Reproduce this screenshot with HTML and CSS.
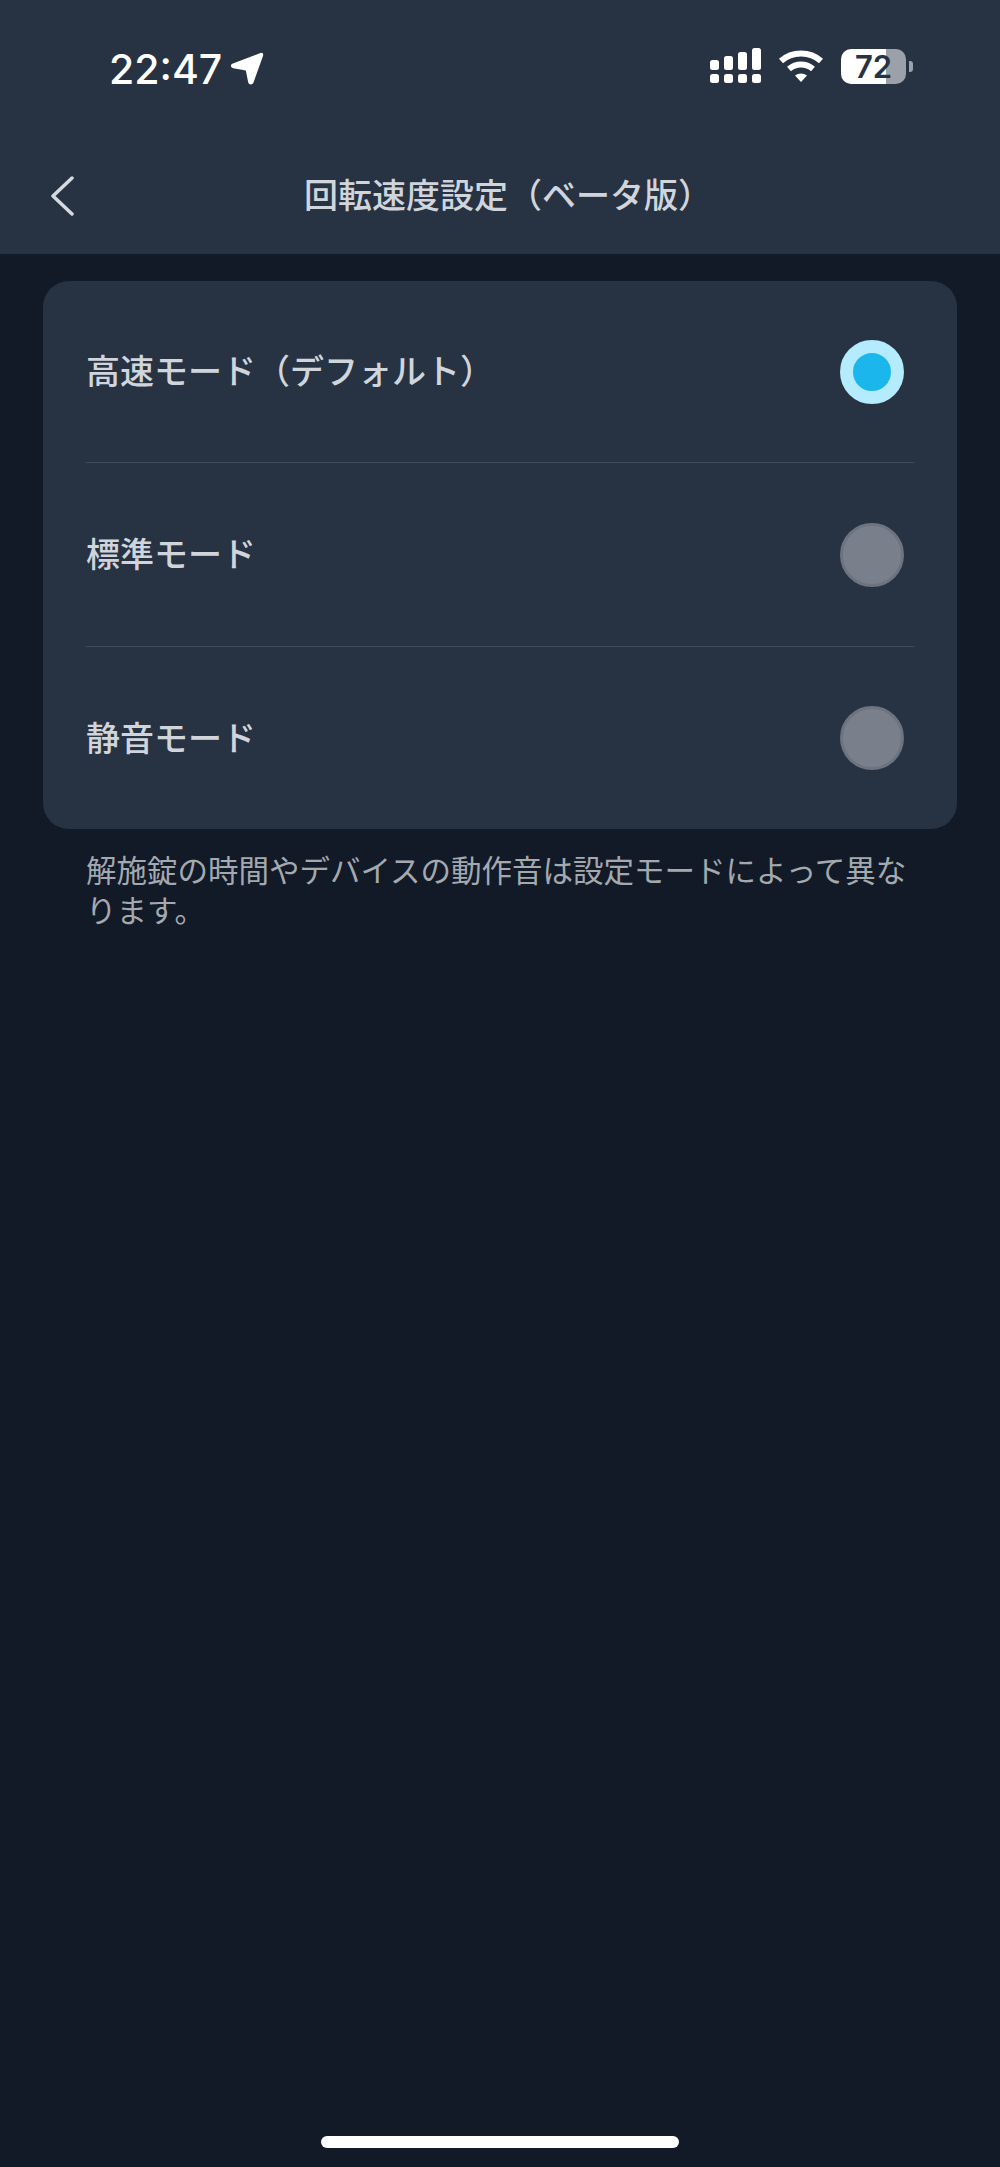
FILE: index.html
```html
<!DOCTYPE html>
<html lang="ja">
<head>
  <meta charset="UTF-8" />
  <title>回転速度設定</title>
  <link rel="stylesheet" href="styles.css">
</head>
<body>
  <div class="page">
    <header class="header">
      <div class="status-bar">
        <div class="status-left">
          <span class="time">22:47</span>
          <svg class="location" width="34" height="34" viewBox="0 0 34 34">
            <path d="M30.500 1 C32.500 0.300 33.800 1.800 33 4 L23.500 30.500 C22.500 33.300 18.800 33 18.200 30.200 L15.800 18.500 L3.200 16.200 C0.400 15.600 0 12.600 2.800 11.500 Z" fill="#fff"/>
          </svg>
        </div>
        <div class="status-right">
          <svg class="signal" width="51" height="36" viewBox="0 0 51 36" fill="#fff">
            <rect x="0" y="12" width="9" height="10" rx="2.5"/>
            <rect x="14" y="8" width="9" height="14" rx="2.5"/>
            <rect x="28" y="4" width="9" height="18" rx="2.5"/>
            <rect x="42" y="0" width="9" height="22" rx="2.5"/>
            <rect x="0" y="26" width="9" height="9" rx="2.5"/>
            <rect x="14" y="26" width="9" height="9" rx="2.5"/>
            <rect x="28" y="26" width="9" height="9" rx="2.5"/>
            <rect x="42" y="26" width="9" height="9" rx="2.5"/>
          </svg>
          <svg class="wifi" width="46" height="34" viewBox="0 0 46 34" fill="none" stroke="#fff" stroke-width="6">
            <path d="M3 12 C14 2 32 2 43 12"/>
            <path d="M11 20 C18 14 28 14 35 20"/>
            <path d="M23 33 L17 26.500 C20.500 23.800 25.500 23.800 29 26.500 Z" fill="#fff" stroke="none"/>
          </svg>
          <div class="battery">
            <div class="battery-body">72</div>
            <div class="battery-cap"></div>
          </div>
        </div>
      </div>
      <div class="nav-bar">
        <svg class="back" width="24" height="40" viewBox="0 0 24 40" fill="none" stroke="#d5dae0" stroke-width="3.5" stroke-linecap="round" stroke-linejoin="round">
          <path d="M22 2 L3 20 L22 38"/>
        </svg>
        <h1 class="title">回転速度設定（ベータ版）</h1>
      </div>
    </header>

    <main class="content">
      <div class="card">
        <div class="row">
          <span class="row-label">高速モード（デフォルト）</span>
          <span class="radio radio-on"></span>
        </div>
        <div class="row">
          <span class="row-label">標準モード</span>
          <span class="radio"></span>
        </div>
        <div class="row">
          <span class="row-label">静音モード</span>
          <span class="radio"></span>
        </div>
      </div>
      <p class="note">解施錠の時間やデバイスの動作音は設定モードによって異なります。</p>
    </main>

    <div class="home-bar"></div>
  </div>
</body>
</html>
```

FILE: styles.css
```css
body {
  margin: 0;
  padding: 0;
  background: #121a27;
  font-family: "Noto Sans CJK JP", "Noto Sans", sans-serif;
}
.page {
  height: 2167px;
  display: flex;
  flex-direction: column;
  overflow: hidden;
}
.header {
  height: 254px;
  background: #273243;
  box-sizing: border-box;
}
.status-bar {
  height: 100px;
  padding: 48px 87px 0 109px;
  box-sizing: border-box;
  display: flex;
  justify-content: space-between;
  align-items: flex-start;
}
.status-left {
  display: flex;
  align-items: center;
  gap: 8px;
  height: 36px;
  padding-top: 3px;
}
.time {
  font-family: Inter, sans-serif;
  font-size: 41px;
  font-weight: 500;
  line-height: 36px;
  color: #fff;
}
.status-right {
  display: flex;
  align-items: center;
  height: 36px;
  gap: 17px;
}
.signal {
  display: block;
}
.wifi {
  display: block;
}
.battery {
  display: flex;
  align-items: center;
  gap: 3px;
}
.battery-body {
  width: 65px;
  height: 35px;
  border-radius: 10px;
  background: linear-gradient(to right, #fff 70%, #9ca1a9 70%);
  color: #273243;
  font-family: Inter, sans-serif;
  font-size: 31px;
  font-weight: 600;
  line-height: 35px;
  text-align: center;
}
.battery-cap {
  width: 4px;
  height: 11px;
  background: #9ca1a9;
  border-radius: 0 3px 3px 0;
}
.nav-bar {
  height: 154px;
  padding: 0 0 0 50px;
  box-sizing: border-box;
  display: flex;
  align-items: flex-start;
}
.back {
  display: block;
  margin-top: 76px;
}
.title {
  margin: 72px 0 0 230px;
  font-size: 34px;
  font-weight: 500;
  line-height: 44px;
  color: #d0d5dc;
  white-space: nowrap;
}
.content {
  flex: 1;
  padding: 27px 43px 0;
}
.card {
  background: #273243;
  border-radius: 26px;
}
.row {
  height: 183px;
  margin: 0 43px;
  display: flex;
  align-items: center;
  justify-content: space-between;
  border-bottom: 1px solid #3f4a5a;
}
.row:first-child {
  height: 181px;
}
.row:last-child {
  border-bottom: none;
  height: 182px;
}
.row-label {
  padding-bottom: 4px;
  font-size: 34px;
  font-weight: 500;
  color: #d0d5dc;
  white-space: nowrap;
}
.radio {
  width: 64px;
  height: 64px;
  margin-right: 10px;
  border-radius: 50%;
  background: #7a808b;
  border: 3px solid #6d7480;
  box-sizing: border-box;
}
.radio-on {
  border: 13px solid #b4ebfd;
  background: #1ab6ec;
}
.note {
  margin: 20px 43px 0;
  font-size: 30.5px;
  line-height: 40px;
  color: #a4a9b0;
}
.home-bar {
  width: 358px;
  height: 12px;
  margin: 0 auto 19px;
  background: #fff;
  border-radius: 6px;
}
```
